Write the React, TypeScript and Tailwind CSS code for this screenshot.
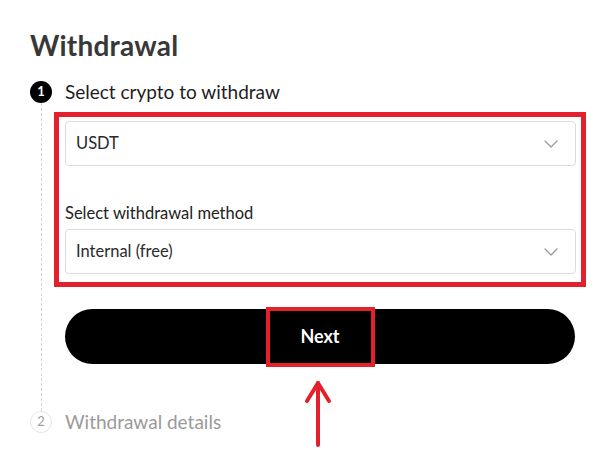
import React from "react";

const Chevron = () => (
  <svg width="14" height="8" viewBox="0 0 14 8" fill="none">
    <path d="M1 1l6 6 6-6" stroke="#9a9a9a" strokeWidth="1.3" strokeLinecap="round" strokeLinejoin="round" />
  </svg>
);

const SelectBox = ({ value }: { value: string }) => (
  <div className="h-[45px] border border-[#dcdcdc] rounded-[4px] flex items-center justify-between pl-[10px] pr-[17px] bg-white">
    <span className="text-[16.5px] text-[#2a2a2a]">{value}</span>
    <Chevron />
  </div>
);

export default function App() {
  return (
    <div
      className="w-[595px] h-[453px] bg-white overflow-hidden"
      style={{ fontFamily: '"Lato", "Open Sans", sans-serif' }}
    >
      <div className="pl-[30px] pt-[28px]">
        <h1 className="text-[28px] leading-[34px] font-bold text-[#383838] tracking-[0.2px]">Withdrawal</h1>
        <div className="flex mt-[19px]">
          <div className="w-[22px] flex flex-col items-center">
            <div className="w-[22px] h-[22px] rounded-full bg-black text-white text-[13px] font-bold flex items-center justify-center">1</div>
            <div className="flex-1 border-l border-dashed border-[#d6d6d6] w-0"></div>
            <div className="w-[22px] h-[22px] rounded-full border border-[#e6e6e6] text-[#a0a0a0] text-[13px] flex items-center justify-center">2</div>
          </div>
          <div className="ml-[13px] w-[510px] flex flex-col">
            <div className="h-[22px] flex items-center text-[19px] text-[#1e1e1e]">Select crypto to withdraw</div>
            <div className="mt-[9px] -ml-[11px] w-[532px] h-[175px] border-[5px] border-[#e3202b] pl-[6px] pr-[5px] pt-[4px]">
              <SelectBox value="USDT" />
              <div className="mt-[36px] h-[22px] flex items-center text-[16.5px] text-[#222222]">Select withdrawal method</div>
              <div className="mt-[5px]">
                <SelectBox value="Internal (free)" />
              </div>
            </div>
            <div className="relative mt-[22px]">
              <div className="h-[55px] rounded-full bg-black flex items-center justify-center text-white text-[18px] font-bold">Next</div>
              <div className="absolute left-[201px] -top-[2px] w-[109px] h-[60px] border-[4px] border-[#e3202b]"></div>
              <svg className="absolute left-[238px] top-[70px]" width="30" height="68" viewBox="0 0 30 68" fill="none">
                <path d="M15 4V66" stroke="#e3202b" strokeWidth="4" strokeLinecap="round" />
                <path d="M4 22L15 4L26 22" stroke="#e3202b" strokeWidth="4" strokeLinecap="round" strokeLinejoin="round" />
              </svg>
            </div>
            <div className="mt-[47px] h-[22px] flex items-center text-[19px] text-[#9a9a9a]">Withdrawal details</div>
          </div>
        </div>
      </div>
    </div>
  );
}
